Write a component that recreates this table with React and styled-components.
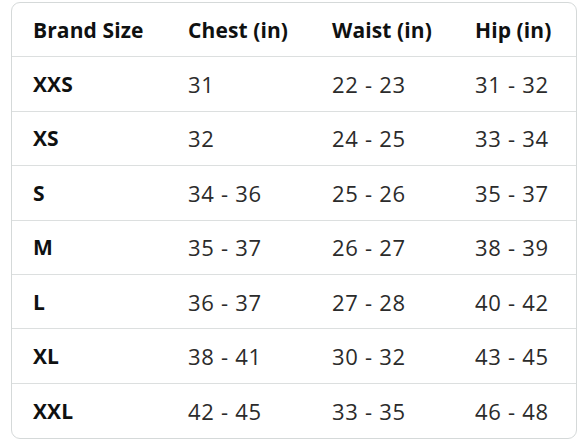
import React from 'react'
import styled, { createGlobalStyle } from 'styled-components';

const GlobalStyle = createGlobalStyle`
  html, body {
    margin: 0;
    padding: 0;
    background: #ffffff;
  }
`;

const columns = ["Brand Size", "Chest (in)", "Waist (in)", "Hip (in)"]

const rows = [
  ["XXS", "31", "22 - 23", "31 - 32"],
  ["XS", "32", "24 - 25", "33 - 34"],
  ["S", "34 - 36", "25 - 26", "35 - 37"],
  ["M", "35 - 37", "26 - 27", "38 - 39"],
  ["L", "36 - 37", "27 - 28", "40 - 42"],
  ["XL", "38 - 41", "30 - 32", "43 - 45"],
  ["XXL", "42 - 45", "33 - 35", "46 - 48"],
]

function App() {
  return (
    <Page>
      <GlobalStyle />
      <Table>
        <Row>
          {columns.map((c) => (
            <Cell key={c} $bold>{c}</Cell>
          ))}
        </Row>
        {rows.map((r, i) => (
          <Row key={r[0]} $last={i === rows.length - 1}>
            {r.map((v, j) => (
              <Cell key={j} $bold={j === 0}>{v}</Cell>
            ))}
          </Row>
        ))}
      </Table>
    </Page>
  )
}

const Page = styled.div`
  width: 588px;
  height: 441px;
  padding: 2px 11px 0 11px;
  box-sizing: border-box;
`;

const Table = styled.div`
  width: 566px;
  height: 437px;
  box-sizing: border-box;
  border: 1px solid #d5d9d9;
  border-radius: 9px;
  display: grid;
  grid-template-rows: repeat(8, 1fr);
  overflow: hidden;
`;

const Row = styled.div`
  display: grid;
  grid-template-columns: 155px 144px 143px 1fr;
  align-items: center;
  border-bottom: ${p => (p.$last ? "none" : "1px solid #dcdfdf")};
`;

const Cell = styled.div`
  padding-left: 21px;
  font-family: "Open Sans", "Noto Sans", sans-serif;
  font-size: ${p => (p.$bold ? "21px" : "22px")};
  letter-spacing: ${p => (p.$bold ? "0.1px" : "0.7px")};
  font-weight: ${p => (p.$bold ? 700 : 400)};
  color: ${p => (p.$bold ? "#0f1111" : "#2b2b2b")};
  white-space: nowrap;
`;

export default App;
